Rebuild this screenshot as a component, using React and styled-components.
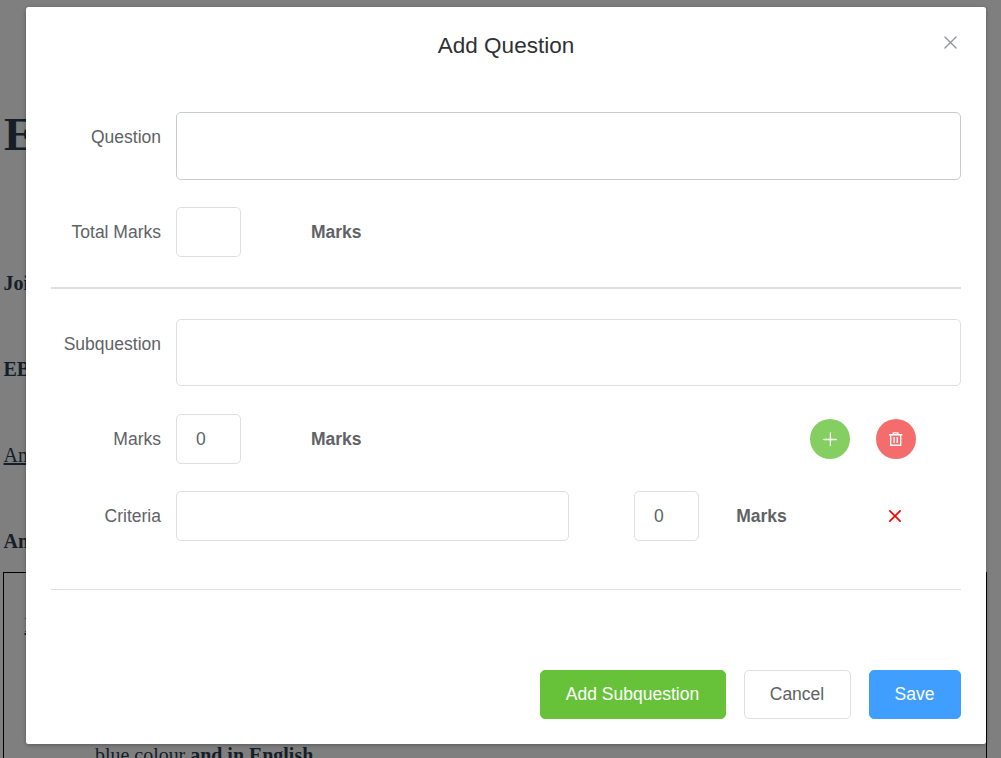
import React from 'react';
import styled, { createGlobalStyle, css } from 'styled-components';

const GlobalStyle = createGlobalStyle`
  *, *::before, *::after { box-sizing: border-box; }
  html, body { margin: 0; height: 100%; overflow: hidden; background: #fff; }
  button, input, textarea { font: inherit; letter-spacing: inherit; }
`;

const Screen = styled.div`
  position: relative;
  width: 1001px;
  height: 758px;
  overflow: hidden;
`;

const Page = styled.article`
  height: 758px;
  padding: 107px 14px 0 3px;
  overflow: hidden;
  background: #fff;
  color: #2c3e50;
  font-family: 'Liberation Serif', 'Times New Roman', serif;
  font-size: 20px;
`;

const PageTitle = styled.h1`
  margin: 0 0 110px 1px;
  height: 54px;
  line-height: 54px;
  font-size: 47px;
`;

const Paragraph = styled.p`
  margin: 0 0 ${(p) => p.$gap || 62}px 0.5px;
  height: 24px;
  line-height: 24px;
  font-weight: ${(p) => (p.$bold ? 700 : 400)};
  ${(p) => p.$underline && css`
    text-decoration: underline;
    text-decoration-thickness: 2px;
  `}
`;

const PageTable = styled.div`
  height: 300px;
  border: 1px solid #000;
  padding: 40px 0 0 20px;
`;

const TableText = styled.p`
  margin: 0 0 0 71px;
  height: 24px;
  line-height: 24px;
  font-size: 19.95px;
`;

const Overlay = styled.div`
  position: absolute;
  inset: 0;
  padding: 7px 15px 0 26px;
  background: rgba(0, 0, 0, 0.5);
`;

const Dialog = styled.section`
  height: 737px;
  padding: 0 25px;
  border-radius: 2.5px;
  background: #fff;
  box-shadow: 0 1px 4px rgba(0, 0, 0, 0.3);
  color: #606266;
  font-family: 'Liberation Sans', Arial, sans-serif;
  font-size: 17.5px;
`;

const Header = styled.header`
  display: grid;
  grid-template-columns: 20px 1fr 20px;
  height: 105px;
  padding-top: 24px;
`;

const Title = styled.h2`
  grid-column: 2;
  margin: 0;
  height: 30px;
  line-height: 30px;
  text-align: center;
  font-size: 22.5px;
  font-weight: 400;
  color: #303133;
`;

const IconButton = styled.button`
  display: flex;
  align-items: center;
  justify-content: center;
  width: 20px;
  height: 20px;
  padding: 0;
  border: 0;
  background: none;
  color: ${(p) => p.$color};
`;

const CloseButton = styled(IconButton)`
  margin: 1.5px 0 0 -0.5px;
`;

const Row = styled.div`
  display: flex;
  align-items: flex-start;
  margin-bottom: ${(p) => p.$gap}px;
`;

const Label = styled.label`
  width: 125px;
  padding-right: 15px;
  line-height: 50px;
  text-align: right;
`;

const fieldStyle = css`
  display: block;
  border: 1px solid #dcdfe6;
  border-radius: 5px;
  background: #fff;
  color: #606266;
  outline: none;
`;

const TextArea = styled.textarea`
  ${fieldStyle}
  flex: 1;
  height: ${(p) => p.$height}px;
  border-color: ${(p) => (p.$hovered ? '#c8cbd6' : '#dcdfe6')};
  padding: 6px 19px;
  resize: none;
`;

const Input = styled.input`
  ${fieldStyle}
  width: ${(p) => p.$width}px;
  height: 50px;
  padding: 0 19px;
`;

const ScoreInput = styled(Input)`
  margin-left: 65px;
`;

const Unit = styled.strong`
  margin-left: ${(p) => p.$offset}px;
  line-height: 50px;
`;

const Actions = styled.div`
  display: flex;
  gap: 26px;
  margin: 5px 45px 0 auto;
`;

const RoundButton = styled.button`
  display: flex;
  align-items: center;
  justify-content: center;
  width: 40px;
  height: 40px;
  padding: 0;
  border: 0;
  border-radius: 50%;
  background: ${(p) => p.$color};
  color: #fff;
`;

const RemoveButton = styled(IconButton)`
  margin: 14.5px 56px 0 auto;
`;

const Divider = styled.div`
  height: ${(p) => p.$size}px;
  margin-bottom: ${(p) => p.$gap}px;
  background: #dcdfe6;
`;

const Footer = styled.footer`
  display: flex;
  justify-content: flex-end;
  gap: 18px;
`;

const Button = styled.button`
  width: ${(p) => p.$width}px;
  height: 49px;
  padding: 0 1px 1px 0;
  border: 1px solid ${(p) => p.$border || p.$color};
  border-radius: 5px;
  background: ${(p) => p.$color};
  color: ${(p) => (p.$border ? '#606266' : '#fff')};
  font-weight: 500;
  white-space: nowrap;
`;

function CrossIcon({ size, weight }) {
  return (
    <svg width={size} height={size} viewBox="0 0 14 14" fill="none" stroke="currentColor" strokeWidth={weight} strokeLinecap="round">
      <path d="M1 1 13 13M13 1 1 13" />
    </svg>
  );
}

function PlusIcon() {
  return (
    <svg width="14" height="14" viewBox="0 0 14 14" fill="none" stroke="currentColor" strokeWidth="1.3" strokeLinecap="round">
      <path d="M.9 7.5H13.4M7.4 1V13.6" />
    </svg>
  );
}

function TrashIcon() {
  return (
    <svg width="14" height="14" viewBox="0 0 14 14" fill="none" stroke="currentColor" strokeWidth="1.4">
      <path d="M0 2.7H13.4M4.4 2.7V.9H8.9V2.7M1.7 3V13.3H11.7V3M5.1 5V11M8.3 5V11" />
    </svg>
  );
}

export default function App() {
  return (
    <Screen>
      <GlobalStyle />
      <Page>
        <PageTitle>E</PageTitle>
        <Paragraph $bold>Joi</Paragraph>
        <Paragraph $bold>EB</Paragraph>
        <Paragraph $underline>An</Paragraph>
        <Paragraph $bold $gap={19}>An</Paragraph>
        <PageTable>
          <Paragraph $bold $underline $gap={106}>I</Paragraph>
          <TableText>blue colour <b>and in English</b></TableText>
        </PageTable>
      </Page>
      <Overlay>
        <Dialog role="dialog" aria-labelledby="dialog-title">
          <Header>
            <Title id="dialog-title">Add Question</Title>
            <CloseButton $color="#909399" aria-label="Close"><CrossIcon size={13} weight={1.4} /></CloseButton>
          </Header>
          <Row $gap={27}>
            <Label htmlFor="question">Question</Label>
            <TextArea id="question" $height={68} $hovered />
          </Row>
          <Row $gap={30}>
            <Label htmlFor="total">Total Marks</Label>
            <Input id="total" $width={65} />
            <Unit $offset={70}>Marks</Unit>
          </Row>
          <Divider $size={2} $gap={30} />
          <Row $gap={28}>
            <Label htmlFor="subquestion">Subquestion</Label>
            <TextArea id="subquestion" $height={67} />
          </Row>
          <Row $gap={27}>
            <Label htmlFor="marks">Marks</Label>
            <Input id="marks" $width={65} defaultValue="0" />
            <Unit $offset={70}>Marks</Unit>
            <Actions>
              <RoundButton $color="#85ce61" aria-label="Add criteria"><PlusIcon /></RoundButton>
              <RoundButton $color="#f56c6c" aria-label="Delete subquestion"><TrashIcon /></RoundButton>
            </Actions>
          </Row>
          <Row $gap={48}>
            <Label htmlFor="criteria">Criteria</Label>
            <Input id="criteria" $width={393} />
            <ScoreInput $width={65} defaultValue="0" aria-label="Criteria marks" />
            <Unit $offset={37.25}>Marks</Unit>
            <RemoveButton $color="#f00" aria-label="Remove criteria"><CrossIcon size={12} weight={1.9} /></RemoveButton>
          </Row>
          <Divider $size={1} $gap={80} />
          <Footer>
            <Button $width={186} $color="#67c23a">Add Subquestion</Button>
            <Button $width={107} $color="#fff" $border="#dcdfe6">Cancel</Button>
            <Button $width={92} $color="#409eff">Save</Button>
          </Footer>
        </Dialog>
      </Overlay>
    </Screen>
  );
}
